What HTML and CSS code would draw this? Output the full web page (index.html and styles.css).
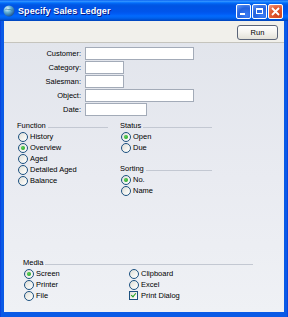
FILE: index.html
```html
<!DOCTYPE html>
<html lang="en">
<head>
    <meta charset="UTF-8">
    <title>Specify Sales Ledger</title>
    <link rel="stylesheet" href="styles.css">
</head>
<body>
<div class="window">
    <div class="titlebar">
        <svg class="app-icon" width="12" height="12" viewBox="0 0 12 12">
            <defs>
                <radialGradient id="globe" cx="0.35" cy="0.3" r="0.75">
                    <stop offset="0" stop-color="#e8f6ff"/>
                    <stop offset="0.45" stop-color="#5fb0d8"/>
                    <stop offset="1" stop-color="#1a4f8c"/>
                </radialGradient>
            </defs>
            <circle cx="6" cy="6" r="5.5" fill="url(#globe)"/>
            <path d="M2.5 4.5 C4 3.5 5 5 6.5 4.5 C7.5 4 8 5.5 9.5 5" stroke="#2e7a9c" stroke-width="0.8" fill="none"/>
        </svg>
        <span class="title">Specify Sales Ledger</span>
        <div class="caption-buttons">
            <span class="cap-btn minimize"><i></i></span>
            <span class="cap-btn maximize"><i></i></span>
            <span class="cap-btn close">
                <svg width="9" height="9" viewBox="0 0 9 9"><path d="M1 1 L8 8 M8 1 L1 8" stroke="#fff" stroke-width="1.8"/></svg>
            </span>
        </div>
    </div>

    <div class="frame">
        <div class="toolbar">
            <button class="run-btn" type="button">Run</button>
        </div>

        <div class="content">
            <div class="fields">
                <label for="customer">Customer:</label>
                <input type="text" id="customer" class="w-long">
                <label for="category">Category:</label>
                <input type="text" id="category" class="w-short">
                <label for="salesman">Salesman:</label>
                <input type="text" id="salesman" class="w-short">
                <label for="object">Object:</label>
                <input type="text" id="object" class="w-long">
                <label for="date">Date:</label>
                <input type="text" id="date" class="w-mid">
            </div>

            <div class="groups">
                <div class="group function">
                    <div class="group-head"><span>Function</span><i class="rule"></i></div>
                    <label class="opt"><input type="radio" name="function">History</label>
                    <label class="opt"><input type="radio" name="function" checked>Overview</label>
                    <label class="opt"><input type="radio" name="function">Aged</label>
                    <label class="opt"><input type="radio" name="function">Detailed Aged</label>
                    <label class="opt"><input type="radio" name="function">Balance</label>
                </div>
                <div class="group status">
                    <div class="group-head"><span>Status</span><i class="rule"></i></div>
                    <label class="opt"><input type="radio" name="status" checked>Open</label>
                    <label class="opt"><input type="radio" name="status">Due</label>

                    <div class="group-head sorting"><span>Sorting</span><i class="rule"></i></div>
                    <label class="opt"><input type="radio" name="sorting" checked>No.</label>
                    <label class="opt"><input type="radio" name="sorting">Name</label>
                </div>
            </div>

            <div class="group media">
                <div class="group-head"><span>Media</span><i class="rule"></i></div>
                <div class="media-grid">
                    <label class="opt"><input type="radio" name="media" checked>Screen</label>
                    <label class="opt"><input type="radio" name="media">Clipboard</label>
                    <label class="opt"><input type="radio" name="media">Printer</label>
                    <label class="opt"><input type="radio" name="media">Excel</label>
                    <label class="opt"><input type="radio" name="media">File</label>
                    <label class="opt"><input type="checkbox" checked>Print Dialog</label>
                </div>
            </div>
        </div>
    </div>
</div>
</body>
</html>
```

FILE: styles.css
```css
html, body {
    margin: 0;
    padding: 0;
}
body {
    width: 288px;
    height: 317px;
    overflow: hidden;
    font-family: "Liberation Sans", Arial, sans-serif;
    font-size: 7.5px;
    color: #000;
}
.window {
    height: 317px;
    display: flex;
    flex-direction: column;
    background: linear-gradient(to right, #0831d9 0, #0a5ae6 1px, #0a5ae6 287px, #0831d9 288px);
    box-sizing: border-box;
}
.titlebar {
    height: 21px;
    display: flex;
    align-items: center;
    padding: 0 5px 0 3px;
    background: linear-gradient(to bottom, #0058ee 0%, #3593ff 5%, #288eff 8%, #127dff 11%, #036ffc 14%, #0262ee 18%, #0057e5 24%, #0054e3 30%, #0055eb 56%, #005bf5 66%, #026afe 76%, #0062ef 86%, #0052d6 93%, #0043b8 100%);
}
.app-icon {
    margin-top: 1px;
}
.title {
    margin-left: 3px;
    color: #fff;
    font-size: 9px;
    font-weight: bold;
    text-shadow: 1px 1px 0 #0a1883;
    letter-spacing: 0.1px;
}
.caption-buttons {
    margin-left: auto;
    display: flex;
    gap: 1px;
    margin-top: 1px;
}
.cap-btn {
    width: 15px;
    height: 15px;
    box-sizing: border-box;
    border: 1px solid #fff;
    border-radius: 2px;
    position: relative;
    display: flex;
    align-items: center;
    justify-content: center;
    background: radial-gradient(circle at 70% 80%, #3b7cf5 0%, #2462de 55%, #6c9ef7 100%);
}
.minimize i {
    position: absolute;
    left: 3px;
    bottom: 3px;
    width: 5px;
    height: 2px;
    background: #fff;
}
.maximize i {
    width: 7px;
    height: 6px;
    box-sizing: border-box;
    border: 1px solid #fff;
    border-top-width: 2px;
}
.close {
    background: radial-gradient(circle at 70% 80%, #d2441c 0%, #e25a30 55%, #f0a08a 100%);
}
.frame {
    flex: 1;
    margin: 0 4px 5px;
    display: flex;
    flex-direction: column;
    min-height: 0;
}
.toolbar {
    height: 21px;
    display: flex;
    justify-content: flex-end;
    align-items: flex-start;
    background: #f1f0eb;
    border-bottom: 1px solid #c5c4bd;
}
.run-btn {
    margin: 4px 6px 0 0;
    width: 41px;
    height: 15px;
    padding: 0;
    font-family: inherit;
    font-size: 7.5px;
    color: #000;
    border: 1px solid #5a6478;
    border-radius: 3px;
    background: linear-gradient(to bottom, #ffffff 0%, #f4f3ee 50%, #e3e1d8 100%);
}
.content {
    flex: 1;
    display: flex;
    flex-direction: column;
    padding: 4px 0 11px;
    background: linear-gradient(to bottom, #e2e5ec 0%, #e9ebf1 50%, #eff1f5 100%);
}
.fields {
    display: grid;
    grid-template-columns: 77px auto;
    grid-auto-rows: 13px;
    column-gap: 4px;
    row-gap: 1px;
    justify-items: start;
}
.fields label {
    justify-self: end;
    line-height: 13px;
}
.fields input {
    height: 13px;
    box-sizing: border-box;
    margin: 0;
    padding: 0 2px;
    border: 1px solid #a3abb8;
    background: #fff;
    font-family: inherit;
    font-size: 7.5px;
}
.w-long { width: 109px; }
.w-short { width: 39px; }
.w-mid { width: 62px; }

.groups {
    display: flex;
    gap: 12px;
    margin-top: 5px;
    padding-left: 13px;
}
.function { width: 91px; }
.status { width: 92px; }

.group-head {
    display: flex;
    align-items: center;
    height: 10px;
    line-height: 10px;
}
.rule {
    flex: 1;
    height: 1px;
    margin: 2px 0 0 2px;
    background: #c3c8d2;
}
.group-head.sorting {
    margin-top: 11px;
}
.opt {
    display: flex;
    align-items: center;
    height: 11px;
    line-height: 11px;
    gap: 2px;
}
.opt input {
    appearance: none;
    -webkit-appearance: none;
    margin: 0 0 0 1px;
    width: 10px;
    height: 10px;
    box-sizing: border-box;
    border: 1px solid #1c5180;
    border-radius: 50%;
    background: linear-gradient(135deg, #dcdcd6 0%, #f4f4f0 60%, #ffffff 100%);
    position: relative;
}
.opt input[type="radio"]:checked::after {
    content: "";
    position: absolute;
    left: 2px;
    top: 2px;
    width: 4px;
    height: 4px;
    border-radius: 50%;
    background: radial-gradient(circle at 40% 40%, #5ad15a, #1c9a1c);
}
.opt input[type="checkbox"] {
    border-radius: 0;
    width: 9px;
    height: 9px;
    margin-right: 1px;
}
.opt input[type="checkbox"]:checked::after {
    content: "";
    position: absolute;
    left: 2px;
    top: 0;
    width: 2px;
    height: 4px;
    border: solid #21a121;
    border-width: 0 1.5px 1.5px 0;
    transform: rotate(40deg);
}
.media {
    margin-top: auto;
    margin-left: 19px;
    width: 230px;
}
.media-grid {
    display: grid;
    grid-template-columns: 105px 1fr;
}
```
